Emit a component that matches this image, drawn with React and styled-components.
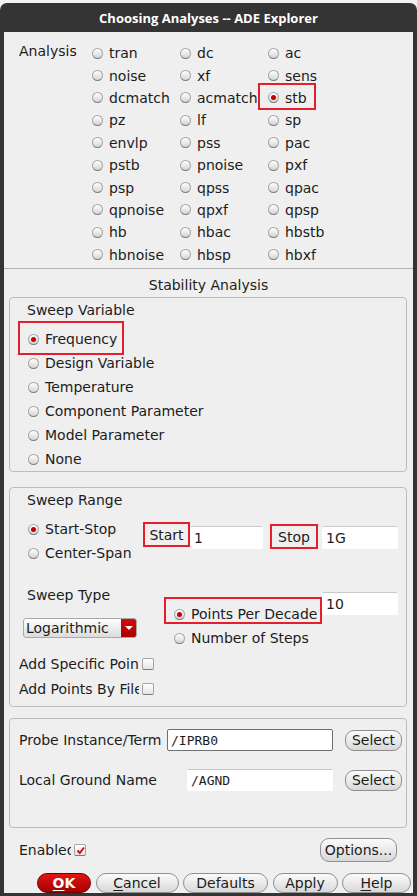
import React from 'react';
import styled, { createGlobalStyle } from 'styled-components';

const GlobalStyle = createGlobalStyle`
  html, body { margin: 0; padding: 0; background: #f2f2f2; }
  body {
    font-family: 'DejaVu Sans', 'Noto Sans', sans-serif;
    font-size: 14px;
    color: #1c1c1c;
  }
`;

const analyses = [
	'tran', 'dc', 'ac',
	'noise', 'xf', 'sens',
	'dcmatch', 'acmatch', 'stb',
	'pz', 'lf', 'sp',
	'envlp', 'pss', 'pac',
	'pstb', 'pnoise', 'pxf',
	'psp', 'qpss', 'qpac',
	'qpnoise', 'qpxf', 'qpsp',
	'hb', 'hbac', 'hbstb',
	'hbnoise', 'hbsp', 'hbxf',
];

const sweepVars = ['Frequency', 'Design Variable', 'Temperature', 'Component Parameter', 'Model Parameter', 'None'];

const Option = ({ label, on, mark }) => {
	const body = (
		<OptionRow>
			<Radio $on={on} />
			<span>{label}</span>
		</OptionRow>
	);
	if (!mark) return body;
	return <Highlight $t={mark[0]} $r={mark[1]} $b={mark[2]} $l={mark[3]}>{body}</Highlight>;
};

const App = () => {
	return (
		<>
			<GlobalStyle />
			<Window>
				<TitleBar>Choosing Analyses -- ADE Explorer</TitleBar>
				<Body>
					<AnalysisGrid>
						<AnalysisLabel>Analysis</AnalysisLabel>
						{analyses.map(a => (
							<Cell key={a}>
								<Option label={a} on={a === 'stb'} mark={a === 'stb' ? [-6, -9, -3, -10] : null} />
							</Cell>
						))}
					</AnalysisGrid>
					<Separator />
					<Heading>Stability Analysis</Heading>

					<Group $mt={0} $h={175}>
						<GroupTitle>Sweep Variable</GroupTitle>
						<VarList>
							{sweepVars.map(v => (
								<Cell key={v} $h={24}>
									<Option label={v} on={v === 'Frequency'} mark={v === 'Frequency' ? [-9, -7, -7, -10] : null} />
								</Cell>
							))}
						</VarList>
					</Group>

					<Group $mt={15} $h={220}>
						<GroupTitle>Sweep Range</GroupTitle>
						<RangeRow>
							<RangeRadios>
								<Cell $h={24}><Option label="Start-Stop" on /></Cell>
								<Cell $h={24}><Option label="Center-Span" /></Cell>
							</RangeRadios>
							<BoxedLabel $w={47} $h={25} $mt={5}>Start</BoxedLabel>
							<Field $w={73} $mt={9} readOnly value="1" />
							<BoxedLabel $w={48} $h={25} $mt={7} $ml={7}>Stop</BoxedLabel>
							<Field $w={76} $mt={9} $ml={4} readOnly value="1G" />
						</RangeRow>

						<TypeRow>
							<TypeLeft>
								<TypeLabel>Sweep Type</TypeLabel>
								<Dropdown>
									<span>Logarithmic</span>
									<DropArrow />
								</Dropdown>
							</TypeLeft>
							<TypeOptions>
								<Cell $h={24}><Option label="Points Per Decade" on mark={[-8, -5, -1, -10]} /></Cell>
								<Cell $h={24}><Option label="Number of Steps" /></Cell>
							</TypeOptions>
							<Field $w={76} $mt={6} readOnly value="10" />
						</TypeRow>

						<CheckList>
							<CheckRow>
								<ClipLabel $w={120}>Add Specific Points</ClipLabel>
								<CheckBox />
							</CheckRow>
							<CheckRow>
								<ClipLabel $w={120}>Add Points By File</ClipLabel>
								<CheckBox />
							</CheckRow>
						</CheckList>
					</Group>

					<Group $mt={11} $h={110}>
						<ProbeList>
							<ProbeRow>
								<ProbeLabel>Probe Instance/Term</ProbeLabel>
								<Field $w={166} $h={22} $mono $dark readOnly value="/IPRB0" />
								<SmallButton>Select</SmallButton>
							</ProbeRow>
							<ProbeRow>
								<ProbeLabel>Local Ground Name</ProbeLabel>
								<Field $w={146} $h={22} $mono readOnly value="/AGND" />
								<SmallButton>Select</SmallButton>
							</ProbeRow>
						</ProbeList>
					</Group>

					<EnableRow>
						<CheckRow>
							<ClipLabel $w={52}>Enabled</ClipLabel>
							<CheckBox $checked>
								<svg width="9" height="9" viewBox="0 0 9 9">
									<polyline points="1.5,4.5 3.8,7 8,1.5" fill="none" stroke="#d0101a" strokeWidth="2" />
								</svg>
							</CheckBox>
						</CheckRow>
						<SmallButton $w={77} $h={24}>Options...</SmallButton>
					</EnableRow>

					<ButtonBar>
						<DialogButton $w={54} $primary><u>O</u>K</DialogButton>
						<DialogButton $w={83}><u>C</u>ancel</DialogButton>
						<DialogButton $w={85}>Defaults</DialogButton>
						<DialogButton $w={65}>Apply</DialogButton>
						<DialogButton $w={69}><u>H</u>elp</DialogButton>
					</ButtonBar>
				</Body>
			</Window>
		</>
	);
};

export default App;

const Window = styled.div`
box-sizing: border-box;
width: 417px;
height: 893px;
margin-top: 3px;
padding: 0 4px 3px;
background: #343434;
border-radius: 7px 7px 0 0;
display: flex;
flex-direction: column;
`;

const TitleBar = styled.div`
height: 29px;
flex: none;
display: flex;
align-items: center;
justify-content: center;
color: #ffffff;
font-family: 'Open Sans', 'DejaVu Sans', sans-serif;
font-weight: 700;
font-size: 13px;
`;

const Body = styled.div`
flex: 1;
background: #efefef;
display: flex;
flex-direction: column;
`;

const AnalysisGrid = styled.div`
display: grid;
grid-template-columns: 73px 88px 88px 1fr;
grid-auto-rows: 22.4px;
padding: 10px 0 0 15px;
height: 224px;
`;

const AnalysisLabel = styled.div`
grid-row: 1 / span 10;
line-height: 18px;
`;

const Cell = styled.div`
display: flex;
align-items: center;
height: ${p => p.$h ? `${p.$h}px` : 'auto'};
`;

const OptionRow = styled.span`
display: inline-flex;
align-items: center;
gap: 6px;
line-height: 18px;
white-space: nowrap;
`;

const Radio = styled.span`
box-sizing: border-box;
flex: none;
width: 11px;
height: 11px;
border-radius: 50%;
border: 1px solid #a3a3a3;
border-bottom-color: #7c7c7c;
background: linear-gradient(#ffffff, #d4d4d4);
display: inline-flex;
align-items: center;
justify-content: center;

&::after {
	content: '';
	width: 5px;
	height: 5px;
	border-radius: 50%;
	background: ${p => p.$on ? '#c40000' : 'transparent'};
}
`;

const Highlight = styled.span`
position: relative;
display: inline-flex;

&::after {
	content: '';
	position: absolute;
	top: ${p => p.$t}px;
	right: ${p => p.$r}px;
	bottom: ${p => p.$b}px;
	left: ${p => p.$l}px;
	border: 2px solid #e41e2a;
	pointer-events: none;
}
`;

const Separator = styled.div`
margin-top: 2px;
height: 1px;
background: #b2b2b2;
`;

const Heading = styled.div`
text-align: center;
line-height: 18px;
padding: 7px 0 3px;
`;

const Group = styled.div`
box-sizing: border-box;
flex: none;
margin: ${p => p.$mt}px 6px 0 5px;
height: ${p => p.$h}px;
border: 1px solid #bdbdbd;
border-radius: 4px;
`;

const GroupTitle = styled.div`
padding: 3px 0 0 17px;
line-height: 18px;
`;

const VarList = styled.div`
margin-top: 8px;
padding-left: 18px;
`;

const RangeRow = styled.div`
display: flex;
align-items: flex-start;
margin-top: 8px;
`;

const RangeRadios = styled.div`
width: 115px;
padding-left: 18px;
flex: none;
`;

const BoxedLabel = styled.div`
box-sizing: border-box;
flex: none;
width: ${p => p.$w}px;
height: ${p => p.$h}px;
margin: ${p => p.$mt}px 0 0 ${p => p.$ml || 0}px;
border: 2px solid #e41e2a;
display: flex;
align-items: center;
justify-content: center;
`;

const Field = styled.input`
box-sizing: border-box;
flex: none;
width: ${p => p.$w}px;
height: ${p => p.$h || 23}px;
margin: ${p => p.$mt || 0}px 0 0 ${p => p.$ml || 0}px;
padding: 0 3px;
background: #ffffff;
border: 1px solid ${p => p.$dark ? '#6f6f6f' : '#ffffff'};
border-top-color: ${p => p.$dark ? '#6f6f6f' : '#c9c9c9'};
border-radius: 2px;
font-family: ${p => p.$mono ? "'DejaVu Sans Mono', monospace" : "'DejaVu Sans', sans-serif"};
font-size: ${p => p.$mono ? 13 : 14}px;
color: #1c1c1c;
outline: none;
`;

const TypeRow = styled.div`
display: flex;
align-items: flex-start;
margin-top: 21px;
height: 64px;
`;

const TypeLeft = styled.div`
width: 154px;
flex: none;
padding-left: 13px;
box-sizing: border-box;
`;

const TypeLabel = styled.div`
line-height: 18px;
padding-left: 4px;
`;

const Dropdown = styled.div`
box-sizing: border-box;
margin-top: 14px;
width: 114px;
height: 20px;
display: flex;
align-items: center;
justify-content: space-between;
padding-left: 2px;
border: 1px solid #a9a9a9;
border-radius: 3px;
background: linear-gradient(#ffffff, #dcdcdc);
overflow: hidden;
`;

const DropArrow = styled.span`
align-self: stretch;
width: 15px;
background: linear-gradient(#d60a0a, #a80000);
display: flex;
align-items: center;
justify-content: center;

&::after {
	content: '';
	border-left: 4px solid transparent;
	border-right: 4px solid transparent;
	border-top: 4px solid #ffffff;
}
`;

const TypeOptions = styled.div`
width: 158px;
flex: none;
padding: 16px 0 0 10px;
box-sizing: border-box;
`;

const CheckList = styled.div`
padding-left: 9px;
margin-top: 1px;
`;

const CheckRow = styled.div`
display: flex;
align-items: center;
height: 25px;
gap: 3px;
`;

const ClipLabel = styled.span`
width: ${p => p.$w}px;
overflow: hidden;
white-space: nowrap;
line-height: 18px;
`;

const CheckBox = styled.span`
box-sizing: border-box;
width: 12px;
height: 12px;
border: 1px solid #a5a5a5;
border-bottom-color: #7a7a7a;
border-radius: 2px;
background: linear-gradient(#ffffff, #e4e4e4);
display: flex;
align-items: center;
justify-content: center;
`;

const ProbeList = styled.div`
display: flex;
flex-direction: column;
gap: 18px;
padding: 10px 4px 0 9px;
`;

const ProbeRow = styled.div`
display: flex;
align-items: center;
height: 22px;
`;

const ProbeLabel = styled.span`
flex: 1;
white-space: nowrap;
line-height: 18px;
`;

const SmallButton = styled.div`
box-sizing: border-box;
width: ${p => p.$w || 57}px;
height: ${p => p.$h || 21}px;
margin-left: 12px;
display: flex;
align-items: center;
justify-content: center;
border: 1px solid #8f8f8f;
border-radius: 9px;
background: linear-gradient(#fbfbfb, #d8d8d8);
`;

const EnableRow = styled.div`
display: flex;
align-items: center;
justify-content: space-between;
margin-top: 10px;
padding: 0 16px 0 15px;
height: 24px;
`;

const ButtonBar = styled.div`
display: flex;
gap: 4.5px;
margin-top: 11px;
padding-left: 33px;
`;

const DialogButton = styled.div`
box-sizing: border-box;
width: ${p => p.$w}px;
height: 20px;
display: flex;
align-items: center;
justify-content: center;
border: 1px solid ${p => p.$primary ? '#6e0000' : '#8f8f8f'};
border-radius: 10px;
background: ${p => p.$primary ? 'linear-gradient(#e31414, #a50000)' : 'linear-gradient(#fbfbfb, #d8d8d8)'};
color: ${p => p.$primary ? '#ffffff' : '#1c1c1c'};
font-weight: ${p => p.$primary ? 700 : 400};

u { text-underline-offset: 2px; }
`;
